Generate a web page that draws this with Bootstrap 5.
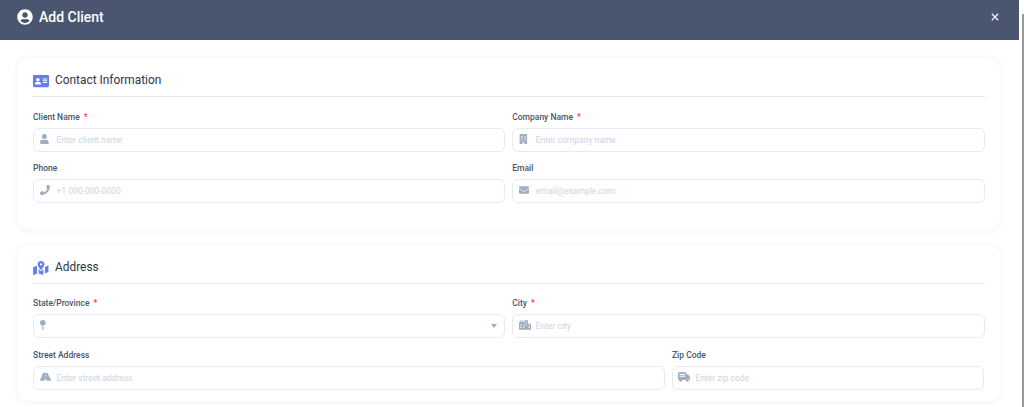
<!DOCTYPE html>
<html lang="en">
<head>
<meta charset="utf-8">
<title>Add Client</title>
<link rel="stylesheet" href="https://cdn.jsdelivr.net/npm/bootstrap@5.3.0/dist/css/bootstrap.min.css">
<style>
html,body{height:407px;overflow:hidden;background:#fff}
body{font-family:Roboto,"Liberation Sans",sans-serif;color:#4a5568}
.shell{width:1018.5px;height:407px;overflow:hidden;background:#fff;flex:none}
.edge{width:5.5px;background:#fff;padding:14px 0 0 3px;flex:none}
.edge-bar{height:393px;background:#999}
.top-bar{height:40px;background:#4a5670;padding:0 19.5px 6px 17px;color:#fff;border:0;border-radius:0}
.top-left{gap:6px}
.top-title{font-size:14px;font-weight:500;margin:0;line-height:1.2}
.top-ico{width:16px;height:16px;fill:#fff;flex:none}
.x-btn{width:8px;height:8px;padding:0;background:none;border:0;display:flex}
.x-btn svg{fill:none;stroke:#edf0f4;stroke-width:1.7}
.body-wrap{padding:17px 18px 0 17px}
.panel{border:1px solid #f8fafc;border-radius:12px;box-shadow:0 1px 6px rgba(15,23,42,.05);padding:0 15px;margin-bottom:14px;background:#fff}
.panel-one{height:173px}
.panel-head{height:39px;border-bottom:1px solid #e2e8f0;gap:6px;padding-top:7px;margin-bottom:13px}
.panel-one .panel-head{margin-bottom:14px}
.panel-title{font-size:11.9px;font-weight:400;color:#2d3748;margin:0}
.panel-ico{width:16px;height:14px;fill:#667eea;flex:none}
.f-label{font-size:8.5px;font-weight:500;color:#4a5568;margin:0 0 5px;line-height:12px;display:block}
.req{color:#e53e3e;margin-left:2px}
.f-grid{--bs-gutter-x:7px;--bs-gutter-y:0}
.f-wrap{margin-bottom:11.5px}
.panel-one .f-wrap{margin-bottom:10.7px}
.f-box{height:23.5px;border:1px solid #e6ebf2;border-radius:6px;background:#fff;padding:0 6px 0 5.5px;gap:5px}
.f-ico{width:12px;height:10px;fill:#a0aec0;flex:none;margin-bottom:1px}
.f-input{font-size:8.5px;border:0;padding:0;background:transparent;border-radius:0;box-shadow:none;color:#4a5568;height:20px}
.f-input::placeholder{color:#cbd5e0;opacity:1}
.caret{width:0;height:0;border-left:3.5px solid transparent;border-right:3.5px solid transparent;border-top:4px solid #a0aec0;margin-right:1px}
.w-street{flex:0 0 66.666%;max-width:66.666%}
.w-zip{flex:0 0 33.333%;max-width:33.333%}
</style>
</head>
<body>
<div class="d-flex">
<div class="shell">
  <header class="top-bar d-flex align-items-center justify-content-between">
    <div class="top-left d-flex align-items-center">
      <svg class="top-ico" viewBox="0 0 512 512"><path d="M256 8C119 8 8 119 8 256s111 248 248 248 248-111 248-248S393 8 256 8zm0 96c49 0 88 39 88 88s-39 88-88 88-88-39-88-88 39-88 88-88zm0 344c-59 0-111-27-146-69 19-36 56-61 98-61 3 0 5 0 7 1 13 4 26 6 41 6s28-2 41-6c2-1 4-1 7-1 42 0 79 25 98 61-35 42-87 69-146 69z"/></svg>
      <h5 class="top-title">Add Client</h5>
    </div>
    <button class="x-btn" type="button" aria-label="Close"><svg viewBox="0 0 10 10" width="8" height="8"><path d="M1 1l8 8M9 1l-8 8"/></svg></button>
  </header>
  <div class="body-wrap">
    <section class="panel panel-one">
      <div class="panel-head d-flex align-items-center">
        <svg class="panel-ico" preserveAspectRatio="none" viewBox="0 0 576 512"><path d="M528 32H48C21 32 0 53 0 80v352c0 27 21 48 48 48h480c27 0 48-21 48-48V80c0-27-21-48-48-48zM176 144a64 64 0 1 1 0 128 64 64 0 0 1 0-128zm112 221c0 10-10 19-22 19H86c-12 0-22-9-22-19v-19c0-32 30-58 67-58h5c12 5 26 8 40 8s28-3 40-8h5c37 0 67 26 67 58v19zm224-45c0 4-4 8-8 8H360c-4 0-8-4-8-8v-16c0-4 4-8 8-8h144c4 0 8 4 8 8v16zm0-64c0 4-4 8-8 8H360c-4 0-8-4-8-8v-16c0-4 4-8 8-8h144c4 0 8 4 8 8v16zm0-64c0 4-4 8-8 8H360c-4 0-8-4-8-8v-16c0-4 4-8 8-8h144c4 0 8 4 8 8v16z"/></svg>
        <h6 class="panel-title">Contact Information</h6>
      </div>
      <div class="row f-grid">
        <div class="col-6 f-wrap">
          <label class="f-label">Client Name <span class="req">*</span></label>
          <div class="f-box d-flex align-items-center">
            <svg class="f-ico" preserveAspectRatio="xMinYMid" viewBox="0 0 448 512"><path d="M224 256a128 128 0 1 0 0-256 128 128 0 0 0 0 256zm90 32h-17a174 174 0 0 1-146 0h-17C60 288 0 348 0 422v42c0 27 21 48 48 48h352c27 0 48-21 48-48v-42c0-74-60-134-134-134z"/></svg>
            <input class="form-control f-input" placeholder="Enter client name">
          </div>
        </div>
        <div class="col-6 f-wrap">
          <label class="f-label">Company Name <span class="req">*</span></label>
          <div class="f-box d-flex align-items-center">
            <svg class="f-ico" preserveAspectRatio="xMinYMid" viewBox="0 0 448 512"><path d="M64 0h320c18 0 32 14 32 32v448c0 18-14 32-32 32H272v-96h-96v96H64c-18 0-32-14-32-32V32C32 14 46 0 64 0zm48 96v48h64V96h-64zm160 0v48h64V96h-64zm-160 96v48h64v-48h-64zm160 0v48h64v-48h-64zm-160 96v48h64v-48h-64zm160 0v48h64v-48h-64z"/></svg>
            <input class="form-control f-input" placeholder="Enter company name">
          </div>
        </div>
        <div class="col-6 f-wrap">
          <label class="f-label">Phone</label>
          <div class="f-box d-flex align-items-center">
            <svg class="f-ico" preserveAspectRatio="xMinYMid" viewBox="0 0 512 512"><path d="M493 24L389 0c-11-3-23 3-27 14l-48 112c-4 10-1 21 7 28l61 50a371 371 0 0 1-177 177l-50-61c-7-8-18-11-28-7L15 361C4 366-2 378 1 389l24 104c2 11 12 19 23 19 256 0 464-207 464-464 0-11-8-21-19-24z"/></svg>
            <input class="form-control f-input" placeholder="+1 000-000-0000">
          </div>
        </div>
        <div class="col-6 f-wrap">
          <label class="f-label">Email</label>
          <div class="f-box d-flex align-items-center">
            <svg class="f-ico" preserveAspectRatio="xMinYMid" viewBox="0 0 512 512"><path d="M502 191c4-3 10 0 10 5v204c0 26-22 48-48 48H48c-26 0-48-22-48-48V196c0-5 6-8 10-5 22 17 52 39 154 113 21 15 57 48 92 48s72-33 92-48c102-74 132-96 154-113zM256 320c23 0 57-29 73-41 133-97 143-105 174-129 6-5 9-12 9-19v-19c0-26-22-48-48-48H48C22 64 0 86 0 112v19c0 7 3 14 9 19 31 24 41 32 174 129 16 12 50 41 73 41z"/></svg>
            <input class="form-control f-input" placeholder="email@example.com">
          </div>
        </div>
      </div>
    </section>
    <section class="panel">
      <div class="panel-head d-flex align-items-center">
        <svg class="panel-ico" viewBox="0 0 576 512"><path d="M288 0c-69 0-126 56-126 126 0 56 82 158 114 196 6 7 17 7 23 0 32-38 115-140 115-196C414 56 357 0 288 0zm0 168a42 42 0 1 1 0-84 42 42 0 0 1 0 84zM20 215A32 32 0 0 0 0 245v250c0 11 11 19 22 15l122-56V214c-8-14-14-28-19-41L20 215zm268 148c-12 0-24-5-32-15-17-20-36-43-53-68v174l170 57V280c-17 25-35 48-53 68-8 10-20 15-32 15zm266-204-122 56v240l108-43c12-5 20-17 20-30V174c0-11-11-19-22-15z"/></svg>
        <h6 class="panel-title">Address</h6>
      </div>
      <div class="row f-grid">
        <div class="col-6 f-wrap">
          <label class="f-label">State/Province <span class="req">*</span></label>
          <div class="f-box d-flex align-items-center justify-content-between">
            <svg class="f-ico" preserveAspectRatio="xMinYMid" viewBox="0 0 288 512"><path d="M112 316v156l22 33c5 7 15 7 20 0l22-33V316a176 176 0 0 1-64 0zM144 0a144 144 0 1 0 0 288 144 144 0 0 0 0-288z"/></svg>
            <span class="caret"></span>
          </div>
        </div>
        <div class="col-6 f-wrap">
          <label class="f-label">City <span class="req">*</span></label>
          <div class="f-box d-flex align-items-center">
            <svg class="f-ico" preserveAspectRatio="xMinYMid" viewBox="0 0 640 512"><path d="M616 192H480V24c0-13-11-24-24-24H312c-13 0-24 11-24 24v72h-64V16c0-9-7-16-16-16h-16c-9 0-16 7-16 16v80h-64V16c0-9-7-16-16-16H80c-9 0-16 7-16 16v80H24c-13 0-24 11-24 24v360c0 18 14 32 32 32h576c18 0 32-14 32-32V216c0-13-11-24-24-24zM128 404c0 7-5 12-12 12H76c-7 0-12-5-12-12v-40c0-7 5-12 12-12h40c7 0 12 5 12 12v40zm0-128c0 7-5 12-12 12H76c-7 0-12-5-12-12v-40c0-7 5-12 12-12h40c7 0 12 5 12 12v40zm160 128c0 7-5 12-12 12h-40c-7 0-12-5-12-12v-40c0-7 5-12 12-12h40c7 0 12 5 12 12v40zm0-128c0 7-5 12-12 12h-40c-7 0-12-5-12-12v-40c0-7 5-12 12-12h40c7 0 12 5 12 12v40zm128 0c0 7-5 12-12 12h-40c-7 0-12-5-12-12v-40c0-7 5-12 12-12h40c7 0 12 5 12 12v40zm0-128c0 7-5 12-12 12h-40c-7 0-12-5-12-12v-40c0-7 5-12 12-12h40c7 0 12 5 12 12v40zm160 256c0 7-5 12-12 12h-40c-7 0-12-5-12-12v-40c0-7 5-12 12-12h40c7 0 12 5 12 12v40zm0-128c0 7-5 12-12 12h-40c-7 0-12-5-12-12v-40c0-7 5-12 12-12h40c7 0 12 5 12 12v40z"/></svg>
            <input class="form-control f-input" placeholder="Enter city">
          </div>
        </div>
        <div class="col-8 f-wrap w-street">
          <label class="f-label">Street Address</label>
          <div class="f-box d-flex align-items-center">
            <svg class="f-ico" preserveAspectRatio="xMinYMid" viewBox="0 0 576 512"><path d="M573 413L380 45c-5-8-13-13-22-13h-76l3 32c1 5-3 9-8 9h-18c-5 0-9-4-8-9l3-32h-76c-9 0-17 5-22 13L3 413c-8 16 3 35 21 35h203l5-62c1-4 4-7 8-7h96c4 0 7 3 8 7l5 62h203c18 0 29-19 21-35zM312 210c1 5-3 9-8 9h-32c-5 0-9-4-8-9l4-52c0-4 4-7 8-7h24c4 0 8 3 8 7l4 52z"/></svg>
            <input class="form-control f-input" placeholder="Enter street address">
          </div>
        </div>
        <div class="col-4 f-wrap w-zip">
          <label class="f-label">Zip Code</label>
          <div class="f-box d-flex align-items-center">
            <svg class="f-ico" preserveAspectRatio="xMinYMid" viewBox="0 0 640 512"><path d="M48 0h352c26 0 48 22 48 48v368H48c-26 0-48-22-48-48V48C0 22 22 0 48 0zm32 96v48h288V96H80zm0 96v48h288v-48H80zm400-64h64l96 112v176h-32a80 80 0 0 0-160 0h-16V128zM136 352a80 80 0 1 1 0 160 80 80 0 0 1 0-160zm368 0a80 80 0 1 1 0 160 80 80 0 0 1 0-160z"/></svg>
            <input class="form-control f-input" placeholder="Enter zip code">
          </div>
        </div>
      </div>
    </section>
  </div>
</div>
<div class="edge"><div class="edge-bar"></div></div>
</div>
<script src="https://cdn.jsdelivr.net/npm/bootstrap@5.3.0/dist/js/bootstrap.bundle.min.js"></script>
</body>
</html>
